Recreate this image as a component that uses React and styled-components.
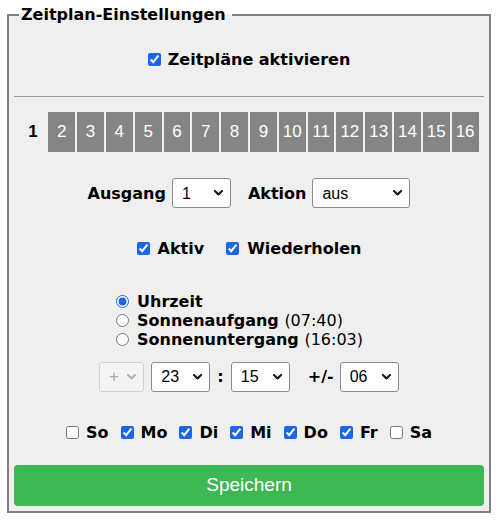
import React, { useState } from 'react';
import styled, { createGlobalStyle } from 'styled-components';

const GlobalStyle = createGlobalStyle`
  html, body { margin: 0; padding: 0; background: #fff; }
  body { font-family: "DejaVu Sans", Verdana, sans-serif; color: #000; }
`;

const Page = styled.div`
  padding: 6px 8px 0 7px;
`;

const Fieldset = styled.fieldset`
  margin: 0;
  padding: 0 5px 5px;
  border: 2px solid #7f7f7f;
  background: #efefef;
  min-width: 0;
`;

const Legend = styled.legend`
  margin-left: 5px;
  padding: 0 6px 0 2px;
  font-weight: bold;
  font-size: 16px;
  line-height: 18px;
`;

const Row = styled.div`
  display: flex;
  align-items: center;
  justify-content: center;
  gap: ${p => p.$gap || 0}px;
  margin-top: ${p => p.$top || 0}px;
  height: ${p => p.$h || 20}px;
`;

const Check = styled.label`
  display: inline-flex;
  align-items: center;
  gap: ${p => p.$gap || 7}px;
  font-weight: bold;
  font-size: 16px;
  white-space: nowrap;

  input {
    margin: 0;
    width: 13px;
    height: 13px;
    accent-color: #1b66e6;
  }
`;

const Rule = styled.hr`
  margin: 27px 0 0;
  border: none;
  border-top: 1px solid #9a9a9a;
  height: 0;
`;

const Tabs = styled.div`
  display: flex;
  gap: 2px;
  padding: 0 5.5px;
  margin-top: 15px;
`;

const Tab = styled.button`
  flex: 1;
  height: 40px;
  border: none;
  padding: 0;
  background: ${p => (p.$active ? 'transparent' : '#858585')};
  color: ${p => (p.$active ? '#000' : '#fff')};
  font-family: "Liberation Sans", Arial, sans-serif;
  font-size: 17px;
  font-weight: ${p => (p.$active ? 'bold' : 'normal')};
  cursor: pointer;
`;

const Label = styled.span`
  font-weight: bold;
  font-size: 16px;
  margin: ${p => p.$m || '0'};
`;

const SelectWrap = styled.span`
  position: relative;
  display: inline-flex;
  margin: ${p => p.$m || '0'};
`;

const Select = styled.select`
  appearance: none;
  -webkit-appearance: none;
  width: ${p => p.$w}px;
  height: 30px;
  box-sizing: border-box;
  padding: 0 0 0 9px;
  border: 1px solid ${p => (p.disabled ? '#d0d0d0' : '#8c8c8c')};
  border-radius: 3px;
  background: ${p => (p.disabled ? '#f3f3f3' : '#fff')};
  color: ${p => (p.disabled ? '#a9a9a9' : '#000')};
  font-family: "Liberation Sans", Arial, sans-serif;
  font-size: 16px;
  opacity: 1;
`;

const Chevron = styled.svg`
  position: absolute;
  right: 8px;
  top: 50%;
  margin-top: -3px;
  pointer-events: none;
`;

const Radios = styled.div`
  display: flex;
  flex-direction: column;
  width: fit-content;
  margin: 34px auto 0;
  padding-right: 19px;
`;

const Radio = styled.label`
  display: flex;
  align-items: center;
  gap: 8px;
  height: 19px;
  font-size: 16px;
  font-weight: bold;
  white-space: nowrap;

  input {
    margin: 0;
    width: 13px;
    height: 13px;
    accent-color: #1b66e6;
  }

  small {
    font-size: 16px;
    font-weight: normal;
  }
`;

const SaveButton = styled.button`
  display: block;
  width: 100%;
  height: 41px;
  margin-top: 22px;
  border: none;
  border-radius: 4px;
  background: #3db853;
  color: #fff;
  font-family: "Liberation Sans", Arial, sans-serif;
  font-size: 19px;
  cursor: pointer;
`;

function Dropdown({ w, value, options, disabled, m }) {
  return (
    <SelectWrap $m={m}>
      <Select $w={w} defaultValue={value} disabled={disabled}>
        {options.map(o => <option key={o}>{o}</option>)}
      </Select>
      <Chevron width="9" height="6" viewBox="0 0 9 6">
        <path d="M1 1 L4.5 4.5 L8 1" fill="none" stroke={disabled ? '#b0b0b0' : '#111'} strokeWidth="2" strokeLinecap="round" strokeLinejoin="round" />
      </Chevron>
    </SelectWrap>
  );
}

const pad = n => String(n).padStart(2, '0');
const hours = Array.from({ length: 24 }, (_, i) => pad(i));
const minutes = Array.from({ length: 60 }, (_, i) => pad(i));
const days = [
  ['So', false], ['Mo', true], ['Di', true], ['Mi', true], ['Do', true], ['Fr', true], ['Sa', false],
];

export default function App() {
  const [active, setActive] = useState(1);
  const [mode, setMode] = useState('uhrzeit');

  return (
    <Page>
      <GlobalStyle />
      <Fieldset>
        <Legend>Zeitplan-Einstellungen</Legend>

        <Row $top={25}>
          <Check><input type="checkbox" defaultChecked />Zeitpläne aktivieren</Check>
        </Row>

        <Rule />

        <Tabs>
          {Array.from({ length: 16 }, (_, i) => i + 1).map(n => (
            <Tab key={n} $active={n === active} onClick={() => setActive(n)}>{n}</Tab>
          ))}
        </Tabs>

        <Row $top={26} $h={30}>
          <Label $m="0 6px 0 0">Ausgang</Label>
          <Dropdown w={59} value="1" options={['1', '2', '3', '4']} />
          <Label $m="0 6px 0 17px">Aktion</Label>
          <Dropdown w={98} value="aus" options={['aus', 'ein', 'umschalten']} />
        </Row>

        <Row $top={30} $gap={22}>
          <Check $gap={8}><input type="checkbox" defaultChecked />Aktiv</Check>
          <Check $gap={8}><input type="checkbox" defaultChecked />Wiederholen</Check>
        </Row>

        <Radios>
          <Radio>
            <input type="radio" name="mode" checked={mode === 'uhrzeit'} onChange={() => setMode('uhrzeit')} />
            Uhrzeit
          </Radio>
          <Radio>
            <input type="radio" name="mode" checked={mode === 'auf'} onChange={() => setMode('auf')} />
            <span>Sonnenaufgang <small>(07:40)</small></span>
          </Radio>
          <Radio>
            <input type="radio" name="mode" checked={mode === 'unter'} onChange={() => setMode('unter')} />
            <span>Sonnenuntergang <small>(16:03)</small></span>
          </Radio>
        </Radios>

        <Row $top={12.5} $h={30}>
          <Dropdown w={45} value="+" options={['+', '-']} disabled m="0 7px 0 0" />
          <Dropdown w={59} value="23" options={hours} />
          <Label $m="0 7px">:</Label>
          <Dropdown w={59} value="15" options={minutes} />
          <Label $m="0 6px 0 18px">+/-</Label>
          <Dropdown w={59} value="06" options={minutes} />
        </Row>

        <Row $top={31} $gap={12}>
          {days.map(([d, on]) => (
            <Check key={d}><input type="checkbox" defaultChecked={on} />{d}</Check>
          ))}
        </Row>

        <SaveButton>Speichern</SaveButton>
      </Fieldset>
    </Page>
  );
}
